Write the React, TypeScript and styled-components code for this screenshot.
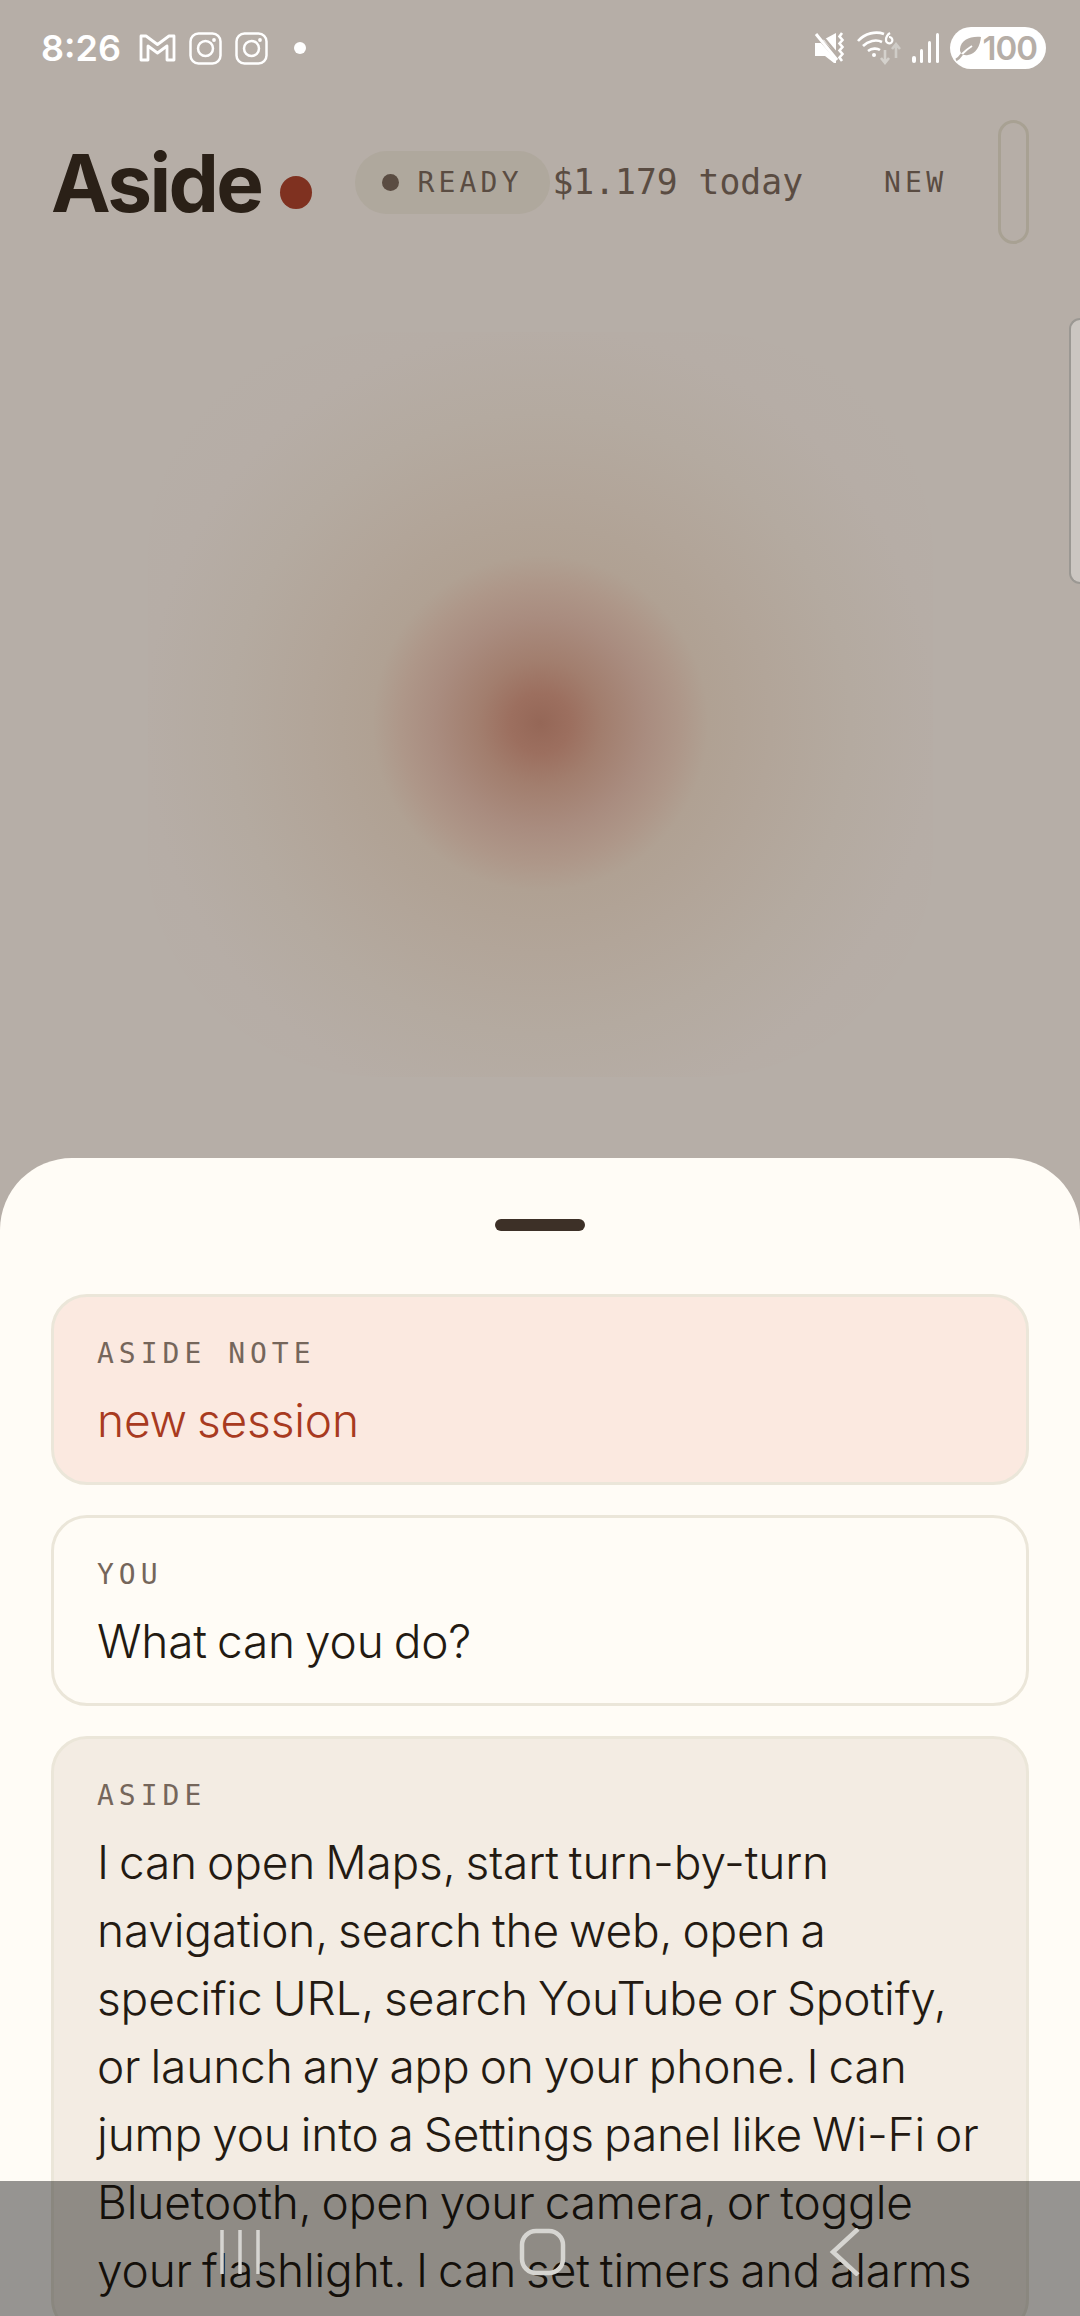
import { createGlobalStyle, styled } from "styled-components";

const GlobalStyle = createGlobalStyle`
  html, body {
    margin: 0;
    padding: 0;
    background: #b6aea7;
  }
  * {
    box-sizing: border-box;
  }
`;

const MONO = `"DejaVu Sans Mono", "Liberation Mono", monospace`;
const SANS = `Inter, "Noto Sans", sans-serif`;

export default function App() {
  return (
    <>
      <GlobalStyle />
      <Screen>
        <StatusBar>
          <StatusLeft>
            <Clock>8:26</Clock>
            <GmailIcon />
            <InstagramIcon />
            <InstagramIcon />
            <NotifDot />
          </StatusLeft>
          <StatusRight>
            <MuteIcon />
            <WifiIcon />
            <SignalIcon />
            <Battery>
              <LeafIcon />
              100
            </Battery>
          </StatusRight>
        </StatusBar>

        <Header>
          <Brand>Aside</Brand>
          <BrandDot />
          <ReadyPill>
            <ReadyDot />
            READY
          </ReadyPill>
          <Cost>$1.179 today</Cost>
          <NewButton>NEW</NewButton>
          <Capsule />
        </Header>

        <Stage>
          <Glow />
        </Stage>

        <Sheet>
          <Handle />
          <Bubble $tone="note">
            <BubbleLabel>ASIDE NOTE</BubbleLabel>
            <BubbleText $tone="note">new session</BubbleText>
          </Bubble>
          <Bubble $tone="you">
            <BubbleLabel>YOU</BubbleLabel>
            <BubbleText>What can you do?</BubbleText>
          </Bubble>
          <Bubble $tone="aside">
            <BubbleLabel>ASIDE</BubbleLabel>
            <BubbleText>
              I can open Maps, start turn-by-turn
              <br />
              navigation, search the web, open a
              <br />
              specific URL, search YouTube or Spotify,
              <br />
              or launch any app on your phone. I can
              <br />
              jump you into a Settings panel like Wi-Fi or
              <br />
              Bluetooth, open your camera, or toggle
              <br />
              your flashlight. I can set timers and alarms
            </BubbleText>
          </Bubble>
        </Sheet>

        <EdgeHandle />

        <NavBar>
          <NavIcon viewBox="0 0 60 48">
            <path d="M11 2v44M29 2v44M47 2v44" stroke="#d6d5d1" strokeWidth="3.5" fill="none" />
          </NavIcon>
          <NavIcon viewBox="0 0 60 48">
            <rect x="9" y="3" width="41" height="42" rx="14" stroke="#d6d5d1" strokeWidth="4.5" fill="none" />
          </NavIcon>
          <NavIcon viewBox="0 0 60 48">
            <path d="M43 1 L18 24 L43 47" stroke="#d6d5d1" strokeWidth="4.5" fill="none" />
          </NavIcon>
        </NavBar>
      </Screen>
    </>
  );
}

function GmailIcon() {
  return (
    <svg width="37" height="30" viewBox="0 0 37 30" fill="none" stroke="#fff" strokeWidth="2.8" strokeLinejoin="round">
      <path d="M2 3h5l11.500 8.500L30 3h5v24h-7V13l-9.500 7L9 13v14H2z" />
    </svg>
  );
}

function InstagramIcon() {
  return (
    <svg width="33" height="33" viewBox="0 0 33 33" fill="none" stroke="#fff" strokeWidth="2.5">
      <rect x="1.500" y="1.500" width="30" height="30" rx="8" />
      <circle cx="16.500" cy="16.500" r="7.500" />
      <circle cx="25" cy="8" r="1.900" fill="#fff" stroke="none" />
    </svg>
  );
}

function MuteIcon() {
  return (
    <svg width="32" height="32" viewBox="0 0 32 32" fill="#fff">
      <path d="M1 11h6l15 17v3h-2l-9-7H1z" />
      <path d="M9 8l13-7v20z" />
      <path d="M5 0l20 24" stroke="#b6aea7" strokeWidth="2.400" />
      <path d="M2 2l21 26" stroke="#fff" strokeWidth="3" />
      <path d="M28 1l-2.500 3.500 3 3.500-3 3.500 3 3.500-3 3.500 3 3.500-3 3.500 2.500 3.500" stroke="#fff" strokeWidth="2.600" fill="none" />
    </svg>
  );
}

function WifiIcon() {
  return (
    <svg width="46" height="36" viewBox="0 0 46 36" fill="none" stroke="#fff" strokeWidth="2.600">
      <path d="M2 11C9 3 20 1 28 4" />
      <path d="M7 16c5-5 13-7 19-4" />
      <path d="M12 21c4-3 9-3 12-1" />
      <circle cx="18" cy="25" r="2" fill="#fff" stroke="none" />
      <path d="M34 3c-3 2-4 5-4 7a3.200 3.200 0 1 0 3-3" strokeWidth="2.200" />
      <path d="M29 20v12M25 28l4 5 4-5" stroke="#d4d1cc" />
      <path d="M40 15v13M36 19l4-5 4 5" stroke="#cfccc7" />
    </svg>
  );
}

function SignalIcon() {
  return (
    <svg width="28" height="30" viewBox="0 0 28 30" fill="#fff">
      <rect x="0" y="23" width="4" height="7" rx="2" />
      <rect x="8" y="16" width="3" height="14" rx="1.500" />
      <rect x="16" y="8" width="3" height="22" rx="1.500" />
      <rect x="24" y="0" width="3" height="30" rx="1.500" />
    </svg>
  );
}

function LeafIcon() {
  return (
    <svg width="28" height="28" viewBox="0 0 28 28" fill="none">
      <path d="M26 3C15 2 6 6 5 15c-.4 4 3 7 8 6C21 20 25 12 26 3z" fill="#b6aea7" />
      <path d="M6 21c3-3 6-6 11-9" stroke="#fff" strokeWidth="2" />
      <path d="M1 26c2-1 4-3 6-6" stroke="#b6aea7" strokeWidth="2.600" />
    </svg>
  );
}

const Screen = styled.div`
  position: relative;
  display: flex;
  flex-direction: column;
  width: 1080px;
  height: 2316px;
  overflow: hidden;
  background: #b6aea7;
`;

const StatusBar = styled.div`
  display: flex;
  align-items: center;
  justify-content: space-between;
  height: 96px;
  padding: 0 34px 0 41px;
`;

const StatusLeft = styled.div`
  display: flex;
  align-items: center;
  gap: 13px;
`;

const StatusRight = styled.div`
  display: flex;
  align-items: center;
  gap: 10px;
`;

const Clock = styled.span`
  font: 600 36px ${SANS};
  color: #fff;
  margin-right: 5px;
`;

const NotifDot = styled.span`
  width: 12px;
  height: 12px;
  margin-left: 13px;
  border-radius: 50%;
  background: #fff;
`;

const Battery = styled.div`
  display: flex;
  align-items: center;
  height: 42px;
  padding: 0 9px 0 5px;
  border-radius: 21px;
  background: #fff;
  color: #b6aea7;
  font: 600 33px ${SANS};
  letter-spacing: -1px;
`;

const Header = styled.div`
  display: flex;
  align-items: center;
  height: 140px;
  margin-top: 16px;
  padding: 0 51px;
`;

const Brand = styled.h1`
  margin: 0;
  font: 700 80px ${SANS};
  letter-spacing: -2.600px;
  color: #2a2017;
`;

const BrandDot = styled.span`
  width: 32px;
  height: 33px;
  margin: 20px 43px 0 19px;
  border-radius: 50%;
  background: #7f3120;
`;

const ReadyPill = styled.div`
  display: flex;
  align-items: center;
  flex-shrink: 0;
  gap: 18px;
  width: 195px;
  height: 63px;
  padding-left: 27px;
  border-radius: 32px;
  background: #afa89d;
  color: #5a4c42;
  font: 400 28px ${MONO};
  letter-spacing: 4.200px;
`;

const ReadyDot = styled.span`
  width: 17px;
  height: 17px;
  border-radius: 50%;
  background: #5a4c42;
`;

const Cost = styled.span`
  margin-left: 2px;
  color: #5a4c42;
  font: 400 34.700px ${MONO};
  white-space: nowrap;
`;

const NewButton = styled.span`
  margin-left: 81px;
  color: #5a4c42;
  font: 400 28px ${MONO};
  letter-spacing: 4.200px;
`;

const Capsule = styled.div`
  flex-shrink: 0;
  width: 31px;
  height: 124px;
  margin-left: auto;
  border: 3px solid #a8a193;
  border-radius: 16px;
`;

const Stage = styled.div`
  flex: 1;
  display: flex;
  justify-content: center;
  align-items: flex-start;
  padding-top: 80px;
`;

const Glow = styled.div`
  width: 785px;
  height: 745px;
  border-radius: 30%;
  background: radial-gradient(
    circle at 50% 52.500%,
    #956757 0,
    #9c6f5f 30px,
    #a27e6e 62px,
    #a98c7f 105px,
    #ae9789 140px,
    #b0a193 168px,
    #b2a599 230px,
    #b4aaa0 310px,
    #b6ada6 395px,
    #b6aea7 470px
  );
`;

const Sheet = styled.div`
  display: flex;
  flex-direction: column;
  flex-shrink: 0;
  gap: 30px;
  height: 1158px;
  padding: 61px 51px 0;
  border-radius: 72px 72px 0 0;
  background: #fffcf6;
`;

const Handle = styled.div`
  align-self: center;
  flex-shrink: 0;
  width: 90px;
  height: 12px;
  margin-bottom: 33px;
  border-radius: 6px;
  background: #3d3027;
`;

const Bubble = styled.div<{ $tone: "note" | "you" | "aside" }>`
  flex-shrink: 0;
  padding: 43px 43px 28px;
  border: 3px solid #ebe6d9;
  border-radius: 36px;
  background: ${(p) => (p.$tone === "note" ? "#fbe9e0" : p.$tone === "aside" ? "#f3ece3" : "#fffcf6")};
`;

const BubbleLabel = styled.div`
  color: #75665b;
  font: 400 28px/28px ${MONO};
  letter-spacing: 5px;
`;

const BubbleText = styled.div<{ $tone?: "note" }>`
  margin-top: 18px;
  color: ${(p) => (p.$tone === "note" ? "#a83a20" : "#231a12")};
  font: 300 46px/68px ${SANS};
  letter-spacing: -0.150px;
  word-spacing: -2.750px;
  white-space: nowrap;
`;

const EdgeHandle = styled.div`
  position: absolute;
  top: 318px;
  right: 0;
  width: 11px;
  height: 266px;
  border: 2px solid #9b9893;
  border-right: none;
  border-radius: 12px 0 0 12px;
  background: #cbc6c1;
`;

const NavBar = styled.div`
  position: absolute;
  left: 0;
  right: 0;
  bottom: 0;
  display: flex;
  justify-content: center;
  gap: 242px;
  height: 135px;
  padding: 47px 0 0 6px;
  background: rgba(0, 0, 0, 0.41);
`;

const NavIcon = styled.svg`
  width: 60px;
  height: 48px;
`;
